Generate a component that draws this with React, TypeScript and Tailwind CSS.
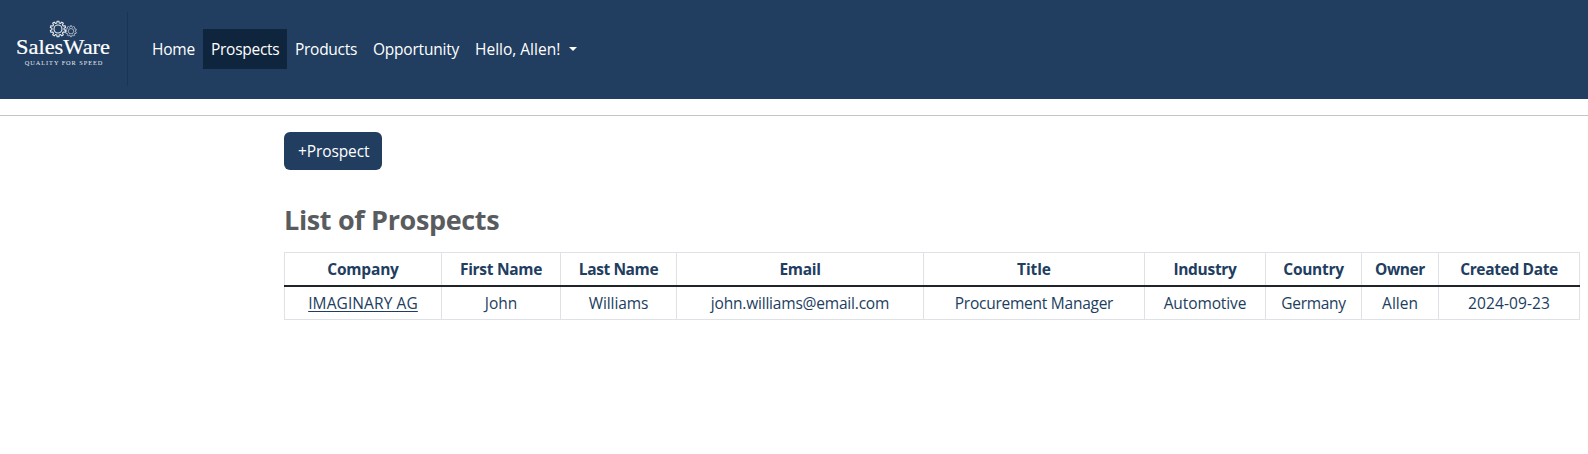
import React from "react";

function gearPath(cx: number, cy: number, outer: number, inner: number, teeth: number): string {
  const pts: string[] = [];
  const step = (Math.PI * 2) / teeth;
  for (let i = 0; i < teeth; i++) {
    const a = i * step - Math.PI / 2;
    const marks: [number, number][] = [
      [-0.3, inner],
      [-0.2, outer],
      [0.2, outer],
      [0.3, inner],
    ];
    marks.forEach(([offset, r]) => {
      const t = a + offset * step;
      pts.push(`${(cx + r * Math.cos(t)).toFixed(2)} ${(cy + r * Math.sin(t)).toFixed(2)}`);
    });
  }
  return `M${pts.join("L")}Z`;
}

function Logo() {
  return (
    <svg className="block h-[99px] w-[127px] shrink-0" viewBox="0 0 127 99" role="img" aria-label="SalesWare">
      <g fill="none" stroke="#e6ebf1">
        <path d={gearPath(58, 29, 7.8, 6.1, 10)} strokeWidth="1.1" strokeLinejoin="round" />
        <circle cx="58" cy="29" r="4" strokeWidth="1.1" />
        <path d={gearPath(71, 31.2, 5.5, 4.3, 10)} strokeWidth="0.75" strokeLinejoin="round" opacity="0.85" />
        <circle cx="71" cy="31.2" r="2.7" strokeWidth="0.75" opacity="0.85" />
      </g>
      <g className="font-['Liberation_Serif',serif]" fill="#ffffff">
        <text x="16" y="53.7" fontSize="21.5" textLength="94" lengthAdjust="spacingAndGlyphs" stroke="#ffffff" strokeWidth="0.2">SalesWare</text>
        <text x="24.8" y="65.2" fontSize="6.3" textLength="77.5" lengthAdjust="spacing" opacity="0.9">QUALITY FOR SPEED</text>
      </g>
    </svg>
  );
}

const columns = [
  { head: "Company", value: "IMAGINARY AG", link: true, headTrack: "tracking-[-0.2px]", track: "tracking-[0.1px]" },
  { head: "First Name", value: "John", headTrack: "tracking-[-0.3px]", track: "" },
  { head: "Last Name", value: "Williams", headTrack: "tracking-[-0.4px]", track: "tracking-[-0.1px]" },
  { head: "Email", value: "john.williams@email.com", headTrack: "tracking-[-0.3px]", track: "tracking-[-0.2px]" },
  { head: "Title", value: "Procurement Manager", headTrack: "tracking-[-0.1px]", track: "tracking-[-0.25px]" },
  { head: "Industry", value: "Automotive", headTrack: "tracking-[-0.3px]", track: "tracking-[-0.1px]" },
  { head: "Country", value: "Germany", headTrack: "tracking-[-0.3px]", track: "tracking-[-0.3px]" },
  { head: "Owner", value: "Allen", headTrack: "tracking-[-0.4px]", track: "" },
  { head: "Created Date", value: "2024-09-23", headTrack: "tracking-[-0.35px]", track: "tracking-[0.1px]" },
];

const rowGrid = "grid grid-cols-[157px_119px_116px_247px_221px_121px_96px_77px_142px]";
const cell = "flex h-8 items-center justify-center whitespace-nowrap border-l border-[#dee2e6] last:border-r";

export default function App() {
  return (
    <div className="min-h-[454px] w-full bg-white font-['Open_Sans',sans-serif] text-[15.5px] leading-6 text-[#213d60]">
      <header className="flex h-[99px] bg-[#213d60] text-white">
        <Logo />
        <div className="mt-3 h-[74px] w-px bg-[#1b3454]" />
        <nav className="mt-[29px] ml-4 flex h-10 items-center whitespace-nowrap">
          <a className="flex h-10 w-[59px] items-center pl-2 tracking-[-0.2px]">Home</a>
          <a className="flex h-10 w-[84px] items-center bg-[#0f253e] pl-2 tracking-[-0.28px]">Prospects</a>
          <a className="flex h-10 w-[78px] items-center pl-2 tracking-[-0.28px]">Products</a>
          <a className="flex h-10 w-[102px] items-center pl-2 tracking-[-0.22px]">Opportunity</a>
          <a className="flex h-10 items-center pl-2">
            <span className="w-[94px]">Hello, Allen!</span>
            <svg className="h-1 w-2" viewBox="0 0 8 4"><path d="M0 0h8L4 4Z" fill="currentColor" /></svg>
          </a>
        </nav>
      </header>
      <div className="mt-4 h-px bg-[#c4c5c6]" />
      <main className="ml-[284px] w-[1296px] pt-4">
        <button className="flex h-[38px] w-[98px] items-center rounded-md bg-[#213d60] pl-[14px] tracking-[-0.1px] text-white">+Prospect</button>
        <h1 className="mt-8 flex h-[34px] items-center pt-0.5 text-[27px] font-bold tracking-[-0.35px] text-[#595c5f]">List of Prospects</h1>
        <div className="mt-4 border-b border-[#dee2e6]">
          <div className={`${rowGrid} border-t border-[#dee2e6] font-bold`}>
            {columns.map((c) => (
              <div key={c.head} className={cell}><span className={c.headTrack}>{c.head}</span></div>
            ))}
          </div>
          <div className="h-0.5 bg-[#212529]" />
          <div className={rowGrid}>
            {columns.map((c) => (
              <div key={c.head} className={cell}>
                <span className={`${c.track} ${c.link ? "underline underline-offset-2" : ""}`}>{c.value}</span>
              </div>
            ))}
          </div>
        </div>
      </main>
    </div>
  );
}
